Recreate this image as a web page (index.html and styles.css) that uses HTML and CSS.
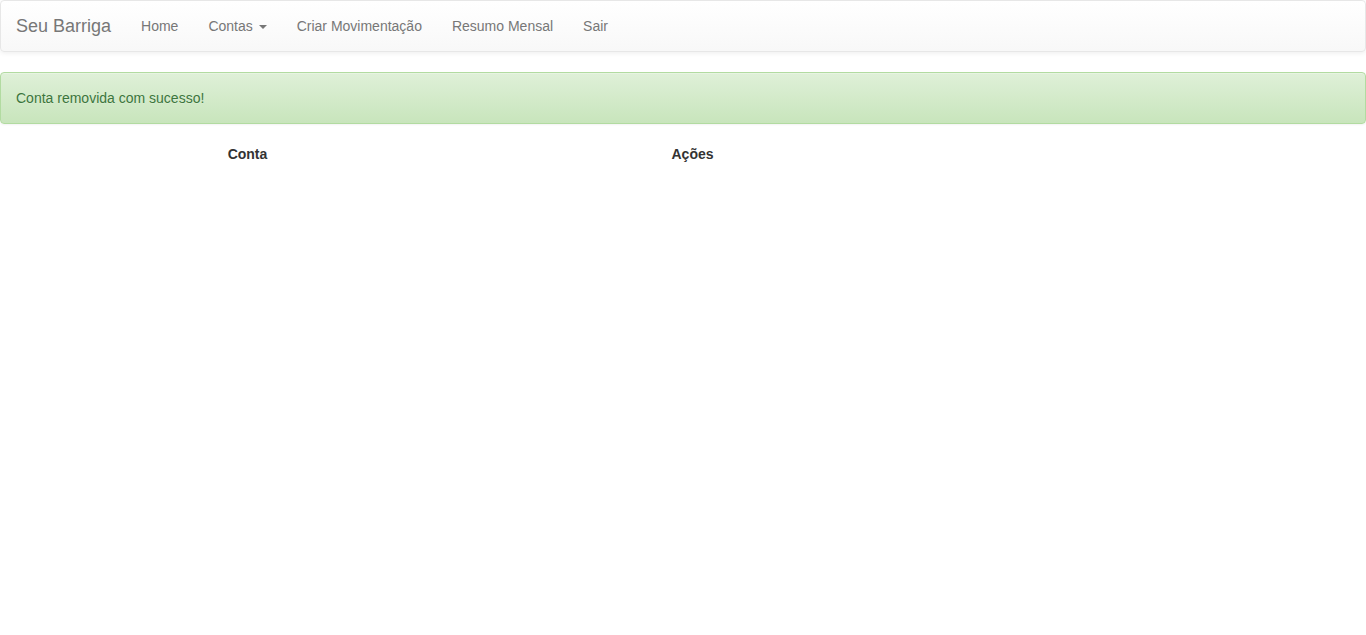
FILE: index.html
```html
<!DOCTYPE html>
<html lang="pt-BR">
<head>
<meta charset="utf-8">
<title>Seu Barriga</title>
<link rel="stylesheet" href="styles.css">
</head>
<body>
<nav class="navbar">
  <a class="brand" href="#">Seu Barriga</a>
  <ul class="nav">
    <li><a href="#">Home</a></li>
    <li><a href="#">Contas <span class="caret"></span></a></li>
    <li><a href="#">Criar Movimentação</a></li>
    <li><a href="#">Resumo Mensal</a></li>
    <li><a href="#">Sair</a></li>
  </ul>
</nav>
<div class="alert">Conta removida com sucesso!</div>
<table class="tabela">
  <thead>
    <tr><th>Conta</th><th>Ações</th></tr>
  </thead>
  <tbody></tbody>
</table>
</body>
</html>
```
FILE: styles.css
```css
* { box-sizing: border-box; }
html, body { margin: 0; padding: 0; }
body {
  font-family: "Liberation Sans", Arial, Helvetica, sans-serif;
  font-size: 14px;
  line-height: 20px;
  color: #333;
  background: #fff;
}
a { text-decoration: none; }

.navbar {
  display: flex;
  align-items: stretch;
  height: 52px;
  border: 1px solid #e7e7e7;
  border-radius: 4px;
  background-image: linear-gradient(to bottom, #fff 0, #f8f8f8 100%);
  box-shadow: inset 0 1px 0 rgba(255,255,255,.15), 0 1px 5px rgba(0,0,0,.075);
  margin-bottom: 20px;
}
.brand {
  display: block;
  padding: 15px;
  height: 50px;
  font-size: 18px;
  line-height: 20px;
  color: #777;
  text-shadow: 0 1px 0 rgba(255,255,255,.25);
}
.nav {
  display: flex;
  list-style: none;
  margin: 0;
  padding: 0;
}
.nav a {
  display: block;
  padding: 15px;
  line-height: 20px;
  color: #777;
  text-shadow: 0 1px 0 rgba(255,255,255,.25);
}
.caret {
  display: inline-block;
  width: 0;
  height: 0;
  margin-left: 2px;
  vertical-align: middle;
  border-top: 4px solid #777;
  border-right: 4px solid transparent;
  border-left: 4px solid transparent;
}

.alert {
  padding: 15px;
  border: 1px solid #b2dba1;
  border-radius: 4px;
  color: #3c763d;
  background-image: linear-gradient(to bottom, #dff0d8 0, #c8e5bc 100%);
  text-shadow: 0 1px 0 rgba(255,255,255,.2);
  box-shadow: inset 0 1px 0 rgba(255,255,255,.25), 0 1px 2px rgba(0,0,0,.05);
  margin-bottom: 20px;
}

.tabela {
  border-collapse: collapse;
  border-spacing: 0;
  margin-left: 25px;
  width: 890px;
  table-layout: fixed;
}
.tabela th {
  padding: 0;
  text-align: center;
  font-weight: bold;
  line-height: 20px;
  color: #333;
}
```
